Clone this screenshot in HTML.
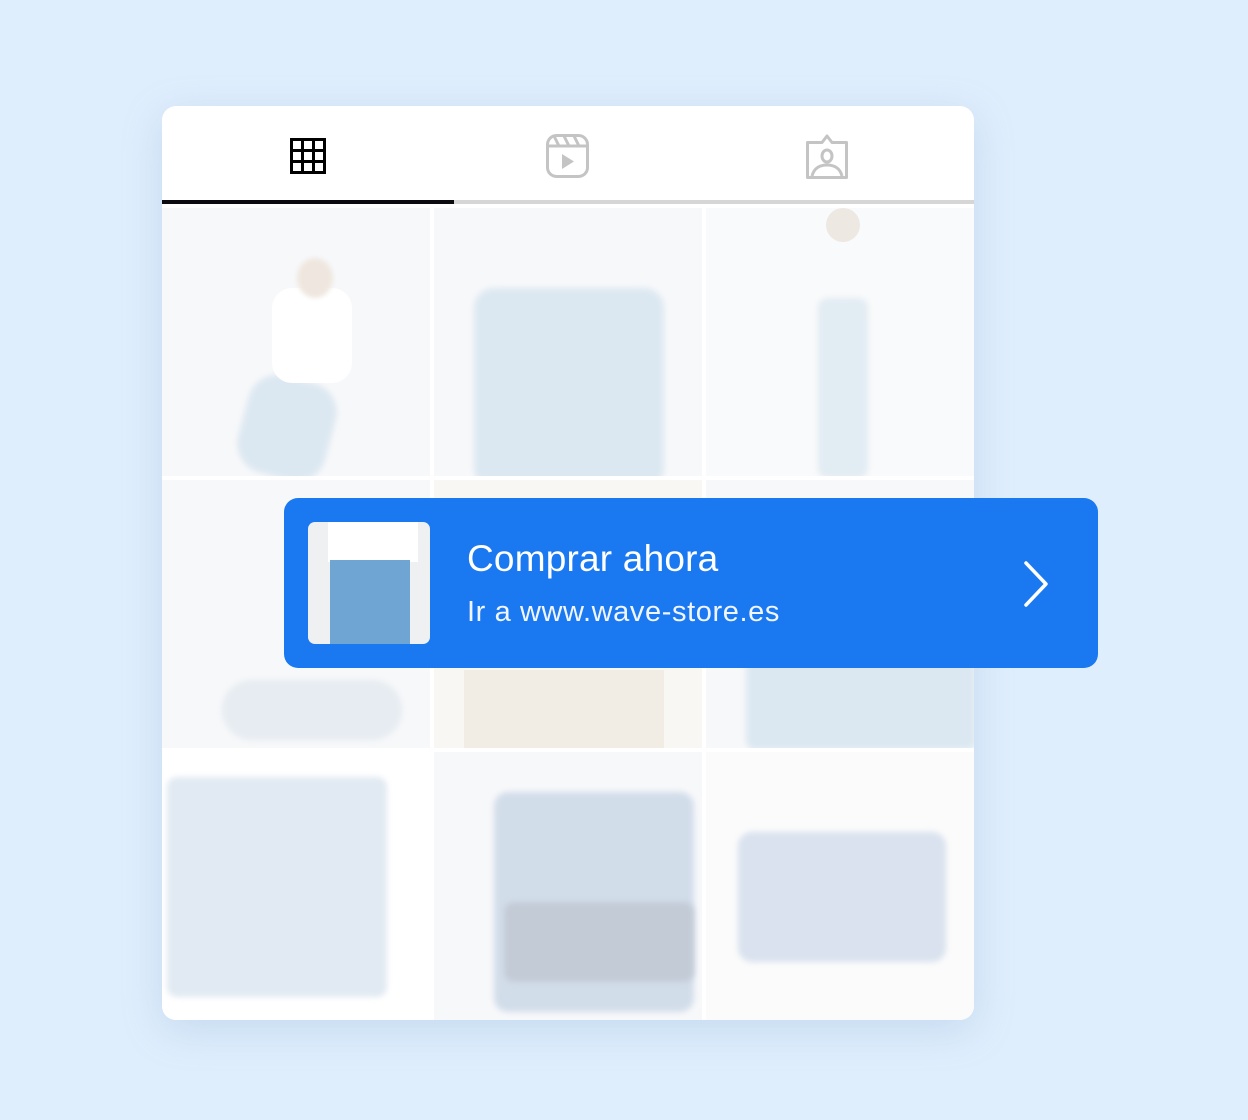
<!DOCTYPE html>
<html><head><meta charset="utf-8"><style>
*{margin:0;padding:0;box-sizing:border-box}
body{width:1248px;height:1120px;background:#dfeefd;position:relative;overflow:hidden;font-family:"Liberation Sans",sans-serif}
.card{position:absolute;left:162px;top:106px;width:812px;height:914px;background:#fff;border-radius:14px;overflow:hidden;box-shadow:0 10px 40px rgba(120,160,200,.25)}
.tabline{position:absolute;top:94px;left:0;width:812px;height:4px;background:#d6d6d6}
.tabline i{position:absolute;left:0;top:0;width:292px;height:4px;background:#0b0b10}
.cell{position:absolute;width:268px;height:268px;background:#f7f8fa;overflow:hidden}
.j{position:absolute;background:#dce8f1;border-radius:30px;filter:blur(3px)}
.w{position:absolute;background:#fdfdfd;border-radius:20px}
.banner{position:absolute;left:284px;top:498px;width:814px;height:170px;background:#1a78f1;border-radius:14px}
.thumb{position:absolute;left:24px;top:24px;width:122px;height:122px;border-radius:7px;background:#eef0f2;overflow:hidden}
.t1{position:absolute;left:183px;top:40px;color:#fff;font-size:37px;letter-spacing:0.2px}
.t2{position:absolute;left:183px;top:98px;color:#f0f5ff;font-size:29px;letter-spacing:0.6px}
</style></head><body>
<div class="card">
<svg style="position:absolute;left:128px;top:32px" width="36" height="36" viewBox="0 0 36 36"><rect x="1.5" y="1.5" width="33" height="33" fill="none" stroke="#000" stroke-width="3"/><path d="M12.5 1.5V34.5M23.5 1.5V34.5M1.5 12.5H34.5M1.5 23.5H34.5" stroke="#000" stroke-width="3"/></svg>
<svg style="position:absolute;left:383px;top:27px" width="46" height="46" viewBox="0 0 46 46"><rect x="2.5" y="2.5" width="40" height="41" rx="9" fill="none" stroke="#c4c4c4" stroke-width="3"/><path d="M2.5 13H42.5M9 3l5 10M19 3l5 10M29 3l5 10" stroke="#c4c4c4" stroke-width="3"/><path d="M17 21v15l12-7.5z" fill="#c4c4c4"/></svg>
<svg style="position:absolute;left:643px;top:28px" width="46" height="46" viewBox="0 0 46 46"><path d="M2.5 8.5H17L22 2l5 6.5H41.5V43.5H2.5Z" fill="none" stroke="#c4c4c4" stroke-width="3" stroke-linejoin="round"/><ellipse cx="22" cy="22" rx="5" ry="6" fill="none" stroke="#c4c4c4" stroke-width="3"/><path d="M7 42c2-8 8-11 15-11s13 3 15 11" fill="none" stroke="#c4c4c4" stroke-width="3"/></svg>
<div class="tabline"><i></i></div>

<div class="cell" style="left:0;top:102px"><div class="j" style="left:80px;top:170px;width:90px;height:100px;transform:rotate(15deg)"></div><div class="w" style="left:110px;top:80px;width:80px;height:95px;background:#fff"></div><div style="position:absolute;left:135px;top:50px;width:36px;height:40px;border-radius:50%;background:#efe7df;filter:blur(2px)"></div></div>
<div class="cell" style="left:272px;top:102px"><div class="j" style="left:40px;top:80px;width:190px;height:200px;border-radius:20px"></div></div>
<div class="cell" style="left:544px;top:102px;background:#f9fafb"><div class="j" style="left:112px;top:90px;width:50px;height:180px;border-radius:10px;background:#e2ecf3"></div><div style="position:absolute;left:120px;top:0;width:34px;height:34px;border-radius:50%;background:#eee8e3"></div></div>

<div class="cell" style="left:0;top:374px"><div class="j" style="left:60px;top:200px;width:180px;height:60px;background:#e6ecf1"></div></div>
<div class="cell" style="left:272px;top:374px;background:#f8f7f4"><div style="position:absolute;left:30px;top:190px;width:200px;height:78px;background:#f1ede5"></div></div>
<div class="cell" style="left:544px;top:374px"><div class="j" style="left:40px;top:180px;width:230px;height:90px;border-radius:10px"></div></div>

<div class="cell" style="left:0;top:646px;background:#fff"><div class="j" style="left:5px;top:25px;width:220px;height:220px;border-radius:10px;background:#e1eaf2"></div></div>
<div class="cell" style="left:272px;top:646px"><div class="j" style="left:60px;top:40px;width:200px;height:220px;border-radius:14px;background:#d2ddea"></div><div class="j" style="left:70px;top:150px;width:190px;height:80px;border-radius:10px;background:#c3cbd7"></div></div>
<div class="cell" style="left:544px;top:646px;background:#fbfbfb"><div class="j" style="left:32px;top:80px;width:208px;height:130px;border-radius:14px;background:#d9e2ee"></div></div>
</div>

<div class="banner">
<div class="thumb"><div style="position:absolute;left:20px;top:0;width:90px;height:40px;background:#fff"></div><div style="position:absolute;left:22px;top:38px;width:80px;height:84px;background:#6fa5d2"></div></div>
<div class="t1">Comprar ahora</div>
<div class="t2">Ir a www.wave-store.es</div>
<svg style="position:absolute;left:738px;top:62px" width="30" height="48" viewBox="0 0 30 48"><path d="M4 3l20 21-20 21" fill="none" stroke="#fff" stroke-width="3.5" stroke-linecap="round" stroke-linejoin="round"/></svg>
</div>
</body></html>
